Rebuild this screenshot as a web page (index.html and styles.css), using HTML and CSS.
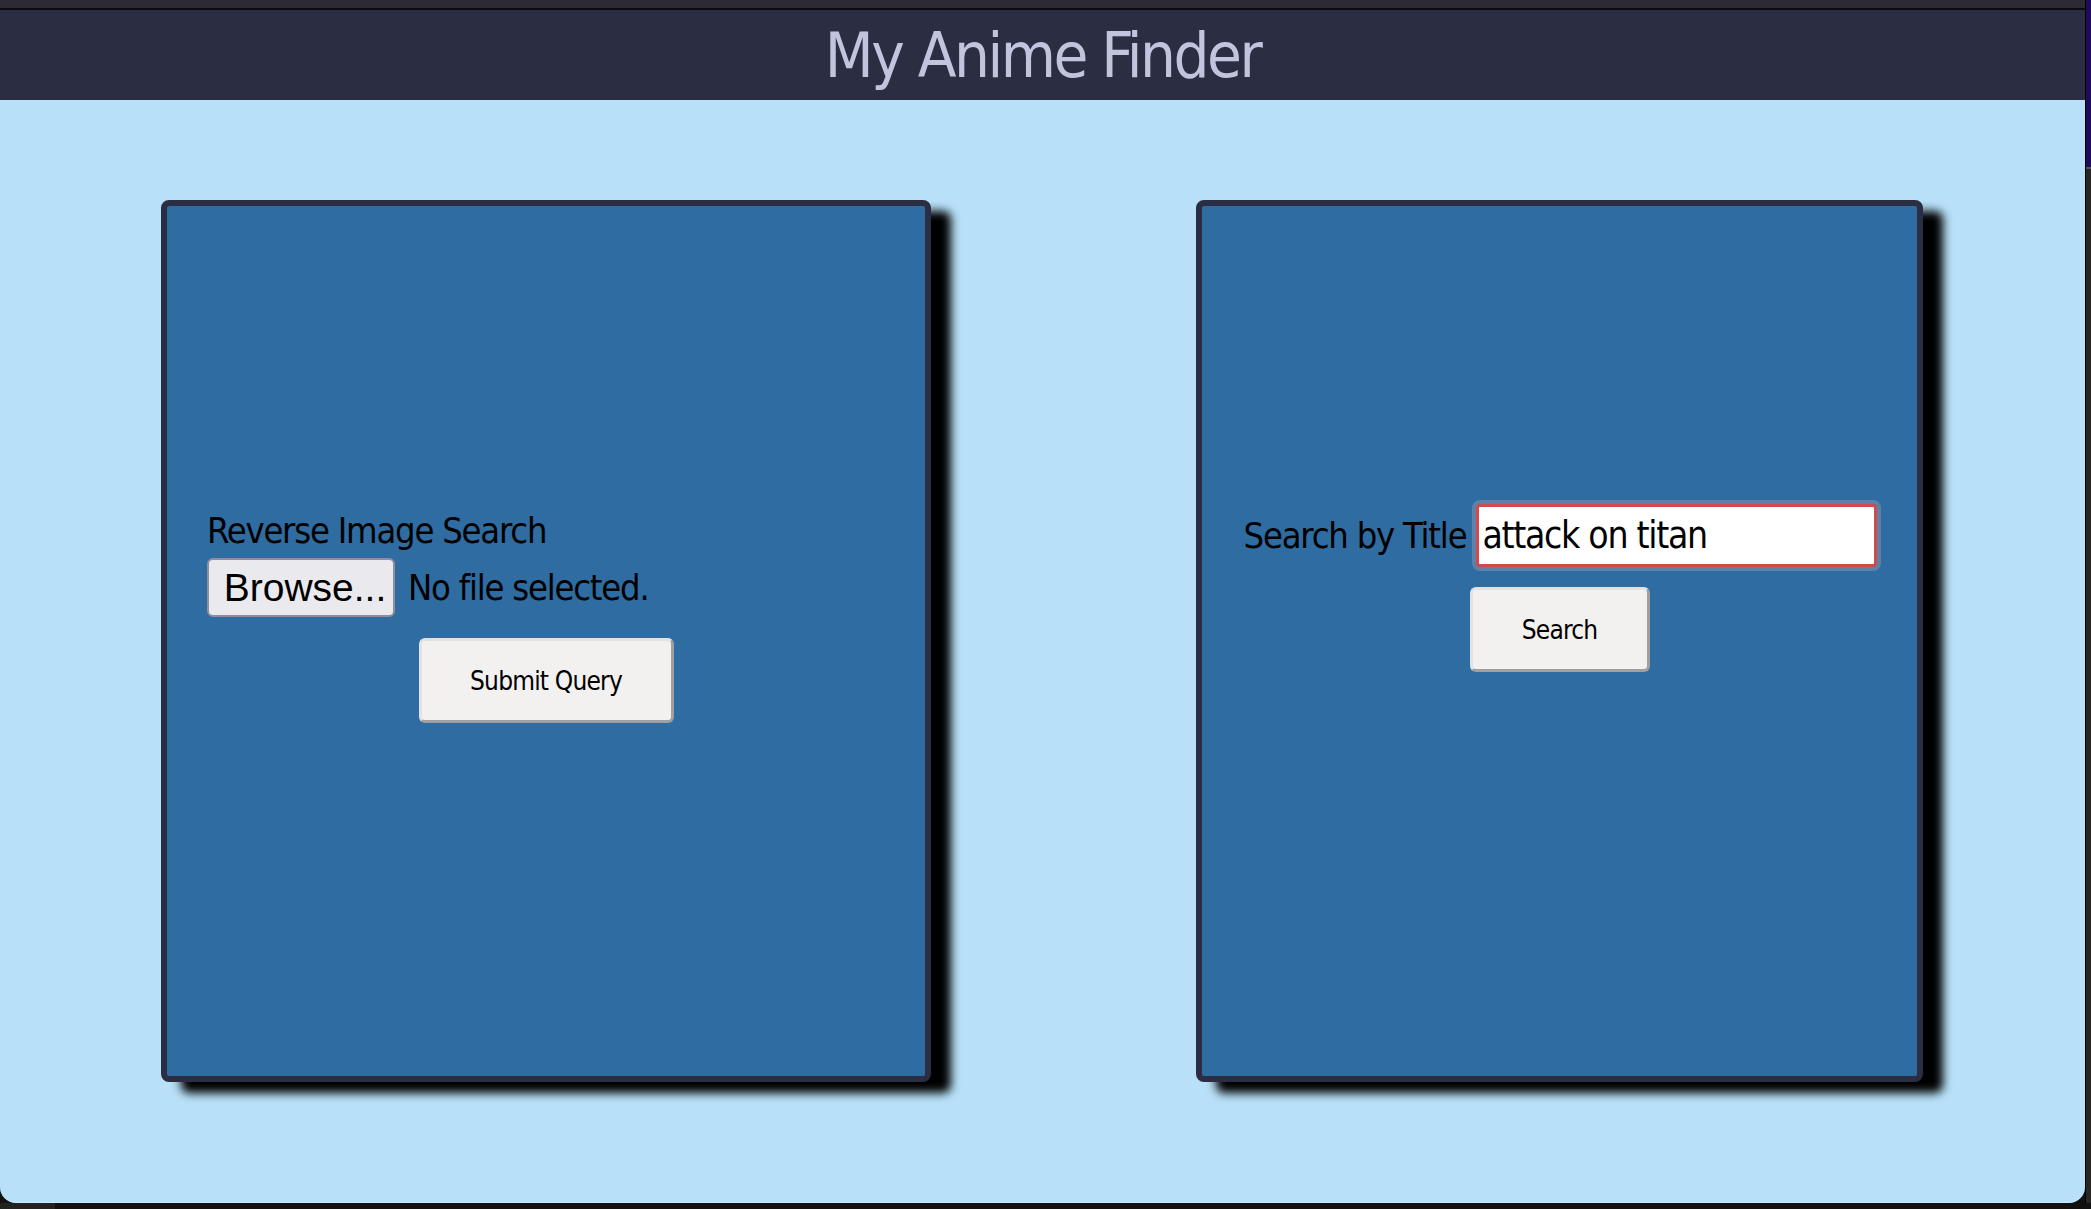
FILE: index.html
```html
<!DOCTYPE html>
<html lang="en">
<head>
<meta charset="utf-8">
<title>My Anime Finder</title>
<link rel="stylesheet" href="styles.css">
</head>
<body>
<div class="screen">
  <div class="window">
    <div class="chrome"></div>
    <header class="header">
      <h1 class="title">My Anime Finder</h1>
    </header>
    <main class="content">
      <section class="card card-image">
        <form class="image-form">
          <div class="image-fields">
            <label class="field-label">Reverse Image Search</label>
            <div class="file-row">
              <button type="button" class="browse">Browse...</button>
              <span class="file-status">No file selected.</span>
            </div>
          </div>
          <button type="button" class="action submit">Submit Query</button>
        </form>
      </section>
      <section class="card card-title">
        <form class="title-form">
          <div class="title-row">
            <label class="field-label">Search by Title</label>
            <input class="title-input" type="text" value="attack on titan">
          </div>
          <button type="button" class="action search">Search</button>
        </form>
      </section>
    </main>
  </div>
  <div class="side">
    <div class="side-top"></div>
    <div class="side-rest"></div>
  </div>
</div>
<div class="bottom-bar">
  <div class="bottom-left"></div>
</div>
</body>
</html>
```

FILE: styles.css
```css
html, body {
  margin: 0;
  padding: 0;
}

body {
  background: #111111;
  width: 2091px;
  height: 1209px;
  overflow: hidden;
  font-family: "DejaVu Sans Condensed", "Liberation Sans", sans-serif;
}

.screen {
  display: flex;
  height: 1203px;
}

.window {
  width: 2085px;
  height: 1203px;
  background: #b8e0f8;
  border-radius: 0 0 16px 16px;
  overflow: hidden;
  display: flex;
  flex-direction: column;
  border-bottom: 1px solid #c8ebfb;
  box-sizing: border-box;
}

.chrome {
  height: 8px;
  background: #2d2a35;
  border-bottom: 2px solid #0c0c10;
}

.header {
  height: 90px;
  background: #2b2d42;
}

.title {
  margin: 0;
  text-align: center;
  font-weight: normal;
  font-size: 63px;
  line-height: 92px;
  color: #c2c4de;
  letter-spacing: -2.5px;
}

.content {
  display: flex;
  justify-content: space-between;
  padding: 100px 162px 0 161px;
}

.card {
  height: 882px;
  box-sizing: border-box;
  background: #2e6ca1;
  border: 6px solid #2b2d42;
  border-radius: 8px;
  box-shadow: 20px 11px 10px #000000;
}

.card-image {
  width: 770px;
  padding-top: 301px;
}

.card-title {
  width: 727px;
  padding-top: 298px;
}

.image-form,
.title-form {
  display: flex;
  flex-direction: column;
}

.image-fields {
  padding-left: 40px;
}

.field-label {
  display: block;
  font-size: 36px;
  line-height: 48px;
  letter-spacing: -1.2px;
  color: #000000;
}

.file-row {
  display: flex;
  align-items: center;
  gap: 13px;
  margin-top: 3px;
}

.browse {
  width: 188px;
  height: 59px;
  box-sizing: border-box;
  padding: 0 4px 0 12px;
  background: #e9e9ee;
  border: 2px solid #8f8f9d;
  border-radius: 6px;
  font-family: "Liberation Sans", Arial, sans-serif;
  font-size: 39px;
  color: #000000;
}

.file-status {
  font-size: 36px;
  line-height: 48px;
  letter-spacing: -1.2px;
  color: #000000;
}

.action {
  align-self: center;
  height: 85px;
  box-sizing: border-box;
  background: #f2f1ef;
  border-style: solid;
  border-width: 3px;
  border-color: #e2e2e2 #a0a0a0 #a0a0a0 #e2e2e2;
  border-radius: 6px;
  font-family: "DejaVu Sans Condensed", sans-serif;
  font-size: 26px;
  letter-spacing: -0.8px;
  color: #000000;
}

.submit {
  width: 255px;
  margin-top: 21px;
}

.title-row {
  display: flex;
  align-items: center;
  justify-content: center;
  gap: 10px;
  padding-left: 2px;
}

.title-input {
  width: 401px;
  height: 63px;
  box-sizing: border-box;
  border: 3px solid #d04b4b;
  border-radius: 4px;
  outline: 4px solid #5f80a8;
  outline-offset: 0;
  background: #ffffff;
  padding: 0 3px;
  font-family: "DejaVu Sans Condensed", sans-serif;
  font-size: 37px;
  letter-spacing: -1.3px;
  color: #000000;
}

.search {
  width: 180px;
  margin-top: 20px;
}

.side {
  width: 6px;
  display: flex;
  flex-direction: column;
  border-left: 1px solid #000000;
  box-sizing: border-box;
}

.side-top {
  height: 167px;
  background: #1e0b5a;
  border-bottom: 2px solid #555555;
}

.side-rest {
  flex: 1;
  background: #262626;
}

.bottom-bar {
  height: 6px;
  background: #111111;
}

.bottom-left {
  width: 55px;
  height: 6px;
  background: #222222;
}
```
